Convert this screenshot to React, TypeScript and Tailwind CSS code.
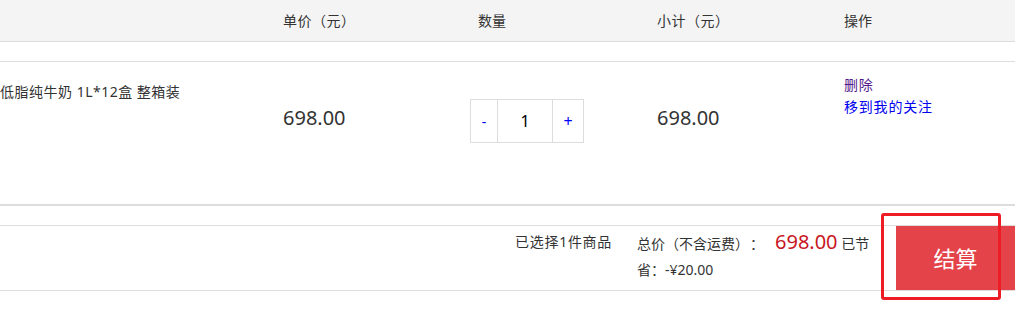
import React from 'react';

const font = { fontFamily: '"Noto Sans", "Noto Sans CJK SC", sans-serif' };

const cols = 'grid grid-cols-[283px_187px_187px_187px_1fr]';

const CartHeader: React.FC = () => (
  <div className={`${cols} h-[42px] items-center bg-[#f4f4f4] border-b border-[#dddddd] text-[14px] text-[#333]`}>
    <div />
    <div className="tracking-[0.5px]">单价（元）</div>
    <div className="pl-[8px]">数量</div>
    <div className="tracking-[0.5px]">小计（元）</div>
    <div>操作</div>
  </div>
);

const QtyStepper: React.FC<{ value: number }> = ({ value }) => (
  <div className="flex h-[44px] w-[114px] border border-[#dddddd]">
    <button className="w-[27px] text-[14px] text-[#0000ff] border-r border-[#dddddd]">-</button>
    <div className="w-[55px] flex items-center justify-center text-[16px] text-black border-r border-[#dddddd]">
      {value}
    </div>
    <button className="flex-1 text-[16px] text-[#0000ff]">+</button>
  </div>
);

const CartItem: React.FC = () => (
  <div className={`${cols} h-[144px] border-b-2 border-[#dddddd] text-[#333]`}>
    <div className="pt-[20px] text-[14px] leading-[20px] whitespace-nowrap tracking-[0.5px]">低脂纯牛奶 1L*12盒 整箱装</div>
    <div className="pt-[42px] text-[20px] leading-[28px]">698.00</div>
    <div className="pt-[37px]">
      <QtyStepper value={1} />
    </div>
    <div className="pt-[42px] text-[20px] leading-[28px]">698.00</div>
    <div className="pt-[12px] text-[14px] leading-[22px] flex flex-col items-start tracking-[0.8px]">
      <a className="text-[#551a8b] cursor-pointer">删除</a>
      <a className="text-[#0000ee] cursor-pointer">移到我的关注</a>
    </div>
  </div>
);

const CartFooter: React.FC = () => (
  <div className="relative flex justify-end h-[65px] border-b border-[#dddddd] text-[14px] text-[#333]">
    <div className="pt-[3px] leading-[26px] mr-[25px] tracking-[0.7px]">已选择1件商品</div>
    <div className="pt-[3px] leading-[26px] w-[240px] mr-[19px]">
      总价（不含运费）<span className="ml-[8px] mr-[11px]">：</span>
      <span className="text-[20px] text-[#c81623]">698.00</span> 已节省：-¥20.00
    </div>
    <button className="w-[119px] h-full bg-[#e4434a] text-white text-[22px]">结算</button>
    {/* annotation box */}
    <div className="absolute left-[881px] top-[-13px] w-[120px] h-[87px] border-[3px] border-[#ee1c25] rounded-[3px] pointer-events-none" />
  </div>
);

const App: React.FC = () => {
  return (
    <div className="w-[1015px] h-[309px] bg-white overflow-hidden" style={font}>
      <CartHeader />
      <div className="h-[20px] border-b border-[#dddddd]" />
      <CartItem />
      <div className="h-[20px] border-b border-[#dddddd]" />
      <CartFooter />
    </div>
  );
};

export default App;
